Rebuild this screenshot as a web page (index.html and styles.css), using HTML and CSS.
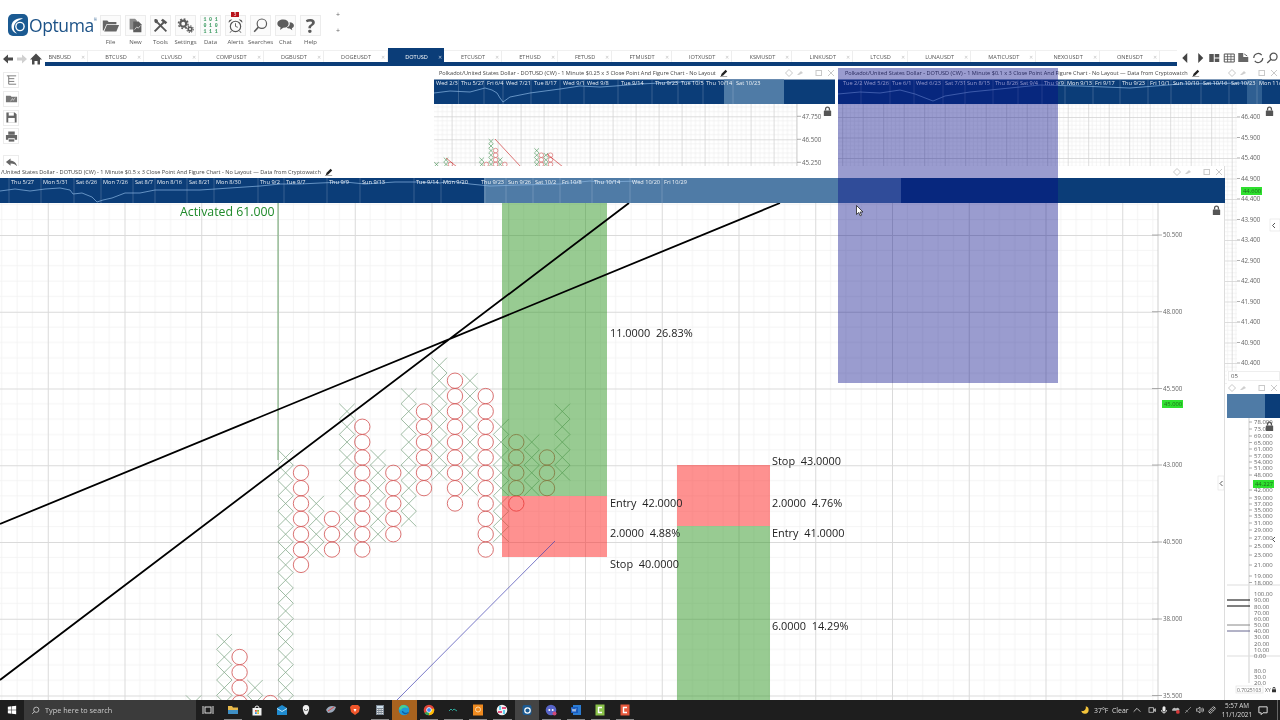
FILE: index.html
```html
<!DOCTYPE html>
<html lang="en">
<head>
<meta charset="utf-8">
<title>Optuma</title>
<link rel="stylesheet" href="styles.css">
</head>
<body>
<svg class="defs" width="0" height="0" aria-hidden="true">
  <defs>
    <symbol id="i-lock" viewBox="0 0 12 12"><path d="M3.2 5.5V3.8a2.8 2.8 0 0 1 5.6 0v1.7h-1.4V3.8a1.4 1.4 0 0 0-2.8 0v1.7z"/><rect x="2" y="5.5" width="8" height="6" rx=".6"/></symbol>
    <symbol id="i-pencil" viewBox="0 0 10 10"><path d="M1 9l1-3 5-5 2 2-5 5z" fill="#222"/><path d="M0 9.6h9" stroke="#222" stroke-width=".6"/></symbol>
    <symbol id="i-ctrl" viewBox="0 0 52 10"><g fill="none" stroke="#c9c9c9" stroke-width="1"><path d="M5 1.5l3.5 3.5L5 8.5 1.500 5z"/><rect x="32" y="2.500" width="5.500" height="5"/><path d="M44 2l6 6m0-6l-6 6"/></g><path d="M13 7l4-4 2 2-4 2z" fill="#cfcfcf"/></symbol>
    <pattern id="grid-main" patternUnits="userSpaceOnUse" x="47.75" y="158.25" width="76.75" height="76.75">
      <path d="M15.35 0V76.750M30.700 0V76.750M46.050 0V76.750M61.400 0V76.750M0 15.350H76.750M0 30.700H76.750M0 46.050H76.750M0 61.400H76.750" stroke="#f1f1f1" stroke-width=".8" fill="none"/>
      <path d="M.5 0V76.750M0 .5H76.750" stroke="#dadada" stroke-width="1" fill="none"/>
    </pattern>
    <pattern id="grid-a" patternUnits="userSpaceOnUse" x="451.6" y="115.3" width="23" height="23">
      <path d="M4.600 0V23M9.200 0V23M13.800 0V23M18.400 0V23M0 4.600H23M0 9.200H23M0 13.800H23M0 18.400H23" stroke="#ececec" stroke-width=".6" fill="none"/>
      <path d="M.4 0V23M0 .4H23" stroke="#cfcfcf" stroke-width=".8" fill="none"/>
    </pattern>
    <pattern id="grid-b" patternUnits="userSpaceOnUse" x="862.7" y="116" width="20.5" height="20.5">
      <path d="M4.100 0V20.500M8.200 0V20.500M12.300 0V20.500M16.400 0V20.500M0 4.100H20.500M0 8.200H20.500M0 12.300H20.500M0 16.400H20.500" stroke="#ededed" stroke-width=".6" fill="none"/>
      <path d="M.4 0V20.500M0 .4H20.500" stroke="#d2d2d2" stroke-width=".8" fill="none"/>
    </pattern>
  </defs>
</svg>

<div class="app">
  <header class="toolbar">
    <div class="logo">
      <svg class="logo-mark" viewBox="0 0 20 22"><rect width="20" height="22" rx="5" fill="#1b5a92"/><path d="M15 4.500C8 3.500 3.500 7.500 3.500 12.500c0 4 2.600 6.500 5.500 7-2.500-2-3.500-4-3-7 .6-3.500 4-6.500 9-8z" fill="#fff"/><circle cx="12" cy="12.500" r="4.800" fill="#fff"/><circle cx="12" cy="12.500" r="3.400" fill="#1b5a92"/></svg>
      <span class="logo-text">Optuma</span><span class="logo-reg">®</span>
    </div>
    <nav class="tools">
      <div class="tool"><div class="tool-btn"><svg viewBox="0 0 21 21"><path d="M2 5h5l1.500 1.500H17V9H6l-3 7H2z" fill="#666"/><path d="M6.500 10H20l-3 7H3.500z" fill="#666"/></svg></div><span>File</span></div>
      <div class="tool"><div class="tool-btn"><svg viewBox="0 0 21 21"><path d="M4 3h6l2 2v10H4z" fill="#8a8a8a"/><path d="M8 6h6l3 3v9H8z" fill="#5e5e5e"/><path d="M9.500 15l2.500-3 1.500 1.500 2.500-3" stroke="#fff" stroke-width=".7" fill="none"/></svg></div><span>New</span></div>
      <div class="tool"><div class="tool-btn"><svg viewBox="0 0 21 21"><path d="M4 17L15 6" stroke="#555" stroke-width="2.200"/><path d="M13 3l5 4-2 2-5-4z" fill="#555"/><path d="M17 17L7 7" stroke="#555" stroke-width="2"/><path d="M4 3.500c2-.8 4 .6 3.800 3L6.500 8C4.500 8 3 6 4 3.500z" fill="#555"/></svg></div><span>Tools</span></div>
      <div class="tool"><div class="tool-btn"><svg viewBox="0 0 21 21" fill="none" stroke="#5c5c5c"><circle cx="8" cy="8.500" r="3.300" stroke-width="2.400"/><circle cx="8" cy="8.500" r="5.300" stroke-width="1.600" stroke-dasharray="2 2.150"/><circle cx="15.500" cy="14.500" r="2" stroke-width="1.800"/><circle cx="15.500" cy="14.500" r="3.600" stroke-width="1.200" stroke-dasharray="1.500 1.300"/></svg></div><span>Settings</span></div>
      <div class="tool"><div class="tool-btn data-btn"><b>1 0 1</b><b>0 1 0</b><b>1 1 1</b></div><span>Data</span></div>
      <div class="tool"><div class="tool-btn"><svg viewBox="0 0 21 21" fill="none" stroke="#555"><circle cx="10.500" cy="11.500" r="5.700" stroke-width="1.300"/><path d="M10.500 8v3.500l2.500 1M6 16.500l-1.500 2M15 16.500l1.500 2" stroke-width="1"/><path d="M3 7.500a3 3 0 0 1 4-3.500zM18 7.500a3 3 0 0 0-4-3.500z" fill="#555" stroke="none"/></svg></div><span>Alerts</span><i class="badge">3</i></div>
      <div class="tool"><div class="tool-btn"><svg viewBox="0 0 21 21" fill="none" stroke="#5a5a5a"><circle cx="12" cy="8.500" r="5.200" stroke-width="1.300"/><path d="M8.200 12.300L3.500 17.500" stroke-width="1.700"/></svg></div><span>Searches</span></div>
      <div class="tool"><div class="tool-btn"><svg viewBox="0 0 21 21" fill="#5c5c5c"><path d="M8 4c3.800 0 6 2 6 4.500S11.800 13 8 13l-3.500 2.500.5-3C3 11.700 1.500 10.300 1.500 8.500 1.500 6 4.200 4 8 4z"/><path d="M15 7c2.800 0 4.800 1.500 4.800 3.500 0 1.400-1 2.500-2.300 3l.5 2.200-2.800-1.800c-1.500 0-2.800-.5-3.500-1.200 2.800-.8 4.300-2.700 3.300-5.700z"/></svg></div><span>Chat</span></div>
      <div class="tool"><div class="tool-btn help-btn">?</div><span>Help</span></div>
    </nav>
    <div class="plus-col"><span>+</span><span>+</span></div>
  </header>

  <div class="tabbar">
    <div class="nav-left">
      <svg viewBox="0 0 14 14"><path d="M2 7l5-4.500V5.500h5v3H7v3z" fill="#4a4a4a"/></svg>
      <svg viewBox="0 0 14 14"><path d="M12 7L7 2.500V5.500H2v3h5v3z" fill="#d0d0d0"/></svg>
      <svg viewBox="0 0 14 14"><path d="M7 1.500l6 6h-2v5H8.500V9h-3v3.500H3v-5H1z" fill="#4a4a4a"/></svg>
    </div>
    <div class="tabs">
      <div class="tab first"><span>BNBUSD</span><i>✕</i></div>
      <div class="tab"><span>BTCUSD</span><i>✕</i></div>
      <div class="tab"><span>CLVUSD</span><i>✕</i></div>
      <div class="tab"><span>COMPUSDT</span><i>✕</i></div>
      <div class="tab"><span>DGBUSDT</span><i>✕</i></div>
      <div class="tab"><span>DOGEUSDT</span><i>✕</i></div>
      <div class="tab active"><span>DOTUSD</span><i>✕</i></div>
      <div class="tab"><span>ETCUSDT</span><i>✕</i></div>
      <div class="tab"><span>ETHUSD</span><i>✕</i></div>
      <div class="tab"><span>FETUSD</span><i>✕</i></div>
      <div class="tab"><span>FTMUSDT</span><i>✕</i></div>
      <div class="tab"><span>IOTXUSDT</span><i>✕</i></div>
      <div class="tab"><span>KSMUSDT</span><i>✕</i></div>
      <div class="tab"><span>LINKUSDT</span><i>✕</i></div>
      <div class="tab"><span>LTCUSD</span><i>✕</i></div>
      <div class="tab"><span>LUNAUSDT</span><i>✕</i></div>
      <div class="tab"><span>MATICUSDT</span><i>✕</i></div>
      <div class="tab"><span>NEXOUSDT</span><i>✕</i></div>
      <div class="tab"><span>ONEUSDT</span><i>✕</i></div>
    </div>
    <div class="nav-right">
      <svg viewBox="0 0 14 14"><path d="M9 2L4 7l5 5z" fill="#444"/></svg>
      <svg viewBox="0 0 14 14"><path d="M5 2l5 5-5 5z" fill="#444"/></svg>
      <svg viewBox="0 0 14 14"><path d="M2 3h4.500v8H2zM7.500 3H12v3.500H7.500zM7.500 7.500H12V11H7.500z" fill="#555"/></svg>
      <svg viewBox="0 0 14 14"><path d="M2 3h10v8H2z" fill="none" stroke="#555" stroke-width="1"/><path d="M2 5.700h10M2 8.300h10M5.300 3v8M8.700 3v8" stroke="#555" stroke-width=".8"/></svg>
      <svg viewBox="0 0 14 14"><path d="M2 2h5v4h5v5H2z" fill="#666"/><path d="M8 3l3 2" stroke="#666"/></svg>
      <svg viewBox="0 0 14 14" fill="none" stroke="#555" stroke-width="1.200"><path d="M2.500 7a4.500 4.500 0 0 1 8-2.800M11.500 7a4.500 4.500 0 0 1-8 2.800"/></svg>
      <svg viewBox="0 0 14 14" fill="none" stroke="#555" stroke-width="1.300"><circle cx="8.300" cy="5.700" r="3.500"/><path d="M5.800 8.200L2 12"/></svg>
    </div>
  </div>

  <main class="workspace">
    <aside class="side">
      <div class="side-btn"><svg viewBox="0 0 14 14"><path d="M2 2h10M4 5h6M4 8h6M4 11h8M4 2v9" stroke="#777" stroke-width="1" fill="none"/></svg></div>
      <div class="side-btn"><svg viewBox="0 0 14 14"><path d="M1 4h5l1 1h6v6H1z" fill="#777"/><path d="M6 10l2-3 1 2 2-3" stroke="#eee" stroke-width=".6" fill="none"/></svg></div>
      <div class="side-btn"><svg viewBox="0 0 14 14"><path d="M1.500 1.500h9l2 2v9h-11z" fill="#666"/><rect x="4" y="1.500" width="5.500" height="3.500" fill="#fff"/><rect x="3.500" y="7.500" width="7" height="5" fill="#fff"/></svg></div>
      <div class="side-btn"><svg viewBox="0 0 14 14"><path d="M3.500 1.500h7V5h-7zM1 5.500h12v5h-2.500V9h-7v1.500H1z" fill="#666"/><rect x="4" y="10" width="6" height="2.500" fill="#666"/></svg></div>
      <div class="side-btn back"><svg viewBox="0 0 14 14"><path d="M1 5.500L6 1.500v2.500c4 0 6.500 2.500 7 6.500-1.500-2.500-3.500-3.500-7-3.500V9.500z" fill="#666"/></svg></div>
    </aside>

    <section class="win win-a">
      <div class="win-title"><span>Polkadot/United States Dollar - DOTUSD (CW) - 1 Minute $0.25 x 3 Close Point And Figure Chart - No Layout</span><svg class="pencil"><use href="#i-pencil"/></svg><svg class="ctrl"><use href="#i-ctrl"/></svg></div>
      <svg class="chart" viewBox="434 78 401 88" width="401" height="88">
        <rect x="434" y="103" width="363" height="63" fill="url(#grid-a)"/>
        <rect x="434" y="78.500" width="401" height="24.500" fill="#0b3d78"/>
        <rect x="724" y="78.500" width="60" height="24.500" fill="#4f7ba6"/>
        <path class="strip-sep" d="M458.500 79v24M484 79v24M503 79v24M531 79v24M560 79v24M584 79v24M618 79v24M652 79v24M678 79v24M703 79v24M733 79v24"/>
        <polyline class="strip-line" points="434,92 450,90 470,91 485,87 492,89 497,92 500,97 503,101 510,96 530,92 560,88 580,85 600,86 615,85 640,83 700,80"/>
        <g class="strip-text">
          <text x="436" y="84">Wed 2/3</text><text x="461" y="84">Thu 5/27</text><text x="487" y="84">Fri 6/4</text><text x="506" y="84">Wed 7/21</text><text x="534" y="84">Tue 8/17</text><text x="563" y="84">Wed 9/1</text><text x="587" y="84">Wed 9/8</text><text x="621" y="84">Tue 9/14</text><text x="655" y="84">Thu 9/23</text><text x="681" y="84">Tue 10/5</text><text x="706" y="84">Thu 10/14</text><text x="736" y="84">Sat 10/23</text>
        </g>
        <g id="marks-a"></g>
        <path d="M495 138l26 28M446 157l11 9M547 153l16 13" stroke="#d03a3a" stroke-width=".7" fill="none"/>
        <path class="axis-line" d="M797 103v63"/>
        <path class="axis-tick" d="M797 115.300h4M797 138.300h4M797 161.300h4"/>
        <g class="axis-text"><text x="802" y="117.500">47.750</text><text x="802" y="140.500">46.500</text><text x="802" y="163.500">45.250</text></g>
        <svg x="822" y="104" width="11" height="12" class="lock"><use href="#i-lock"/></svg>
      </svg>
    </section>

    <section class="win win-b">
      <div class="win-title"><span>Polkadot/United States Dollar - DOTUSD (CW) - 1 Minute $0.1 x 3 Close Point And Figure Chart - No Layout — Data from Cryptowatch</span><svg class="pencil"><use href="#i-pencil"/></svg><svg class="ctrl"><use href="#i-ctrl"/></svg></div>
      <svg class="chart" viewBox="838 78 442 305" width="442" height="305">
        <rect x="838" y="103" width="399" height="280" fill="url(#grid-b)"/>
        <rect x="838" y="78.500" width="442" height="24.500" fill="#0b3d78"/>
        <rect x="1247" y="78.500" width="15" height="24.500" fill="#2f5f92"/>
        <path class="strip-sep" d="M861 79v24M890 79v24M914 79v24M943 79v24M965 79v24M993 79v24M1018 79v24M1042 79v24M1065 79v24M1093 79v24M1120 79v24M1148 79v24M1171 79v24M1201 79v24M1229 79v24M1257 79v24"/>
        <polyline class="strip-line" points="838,93 860,91 880,92 900,89 915,93 933,100 945,95 970,91 1000,88 1040,84 1080,85 1130,87 1180,83 1250,82"/>
        <g class="strip-text">
          <text x="843" y="84">Tue 2/2</text><text x="864" y="84">Wed 5/26</text><text x="892" y="84">Tue 6/1</text><text x="916" y="84">Wed 6/23</text><text x="945" y="84">Sat 7/31</text><text x="967" y="84">Sun 8/15</text><text x="995" y="84">Thu 8/26</text><text x="1020" y="84">Sat 9/4</text><text x="1044" y="84">Thu 9/9</text><text x="1067" y="84">Mon 9/13</text><text x="1095" y="84">Fri 9/17</text><text x="1122" y="84">Thu 9/23</text><text x="1150" y="84">Fri 10/1</text><text x="1173" y="84">Sun 10/10</text><text x="1203" y="84">Sat 10/16</text><text x="1231" y="84">Sat 10/23</text><text x="1259" y="84">Mon 11/</text>
        </g>
        <path class="axis-tick" d="M1237 116h3M1237 136.500h3M1237 157h3M1237 177.500h3M1237 198h3M1237 218.500h3M1237 239h3M1237 259.500h3M1237 280h3M1237 300.500h3M1237 321h3M1237 341.500h3M1237 362h3"/>
        <g class="axis-text"><text x="1241" y="118">46.400</text><text x="1241" y="138.500">45.900</text><text x="1241" y="159">45.400</text><text x="1241" y="179.500">44.900</text><text x="1241" y="200">44.400</text><text x="1241" y="220.500">43.900</text><text x="1241" y="241">43.400</text><text x="1241" y="261.500">42.900</text><text x="1241" y="282">42.400</text><text x="1241" y="302.500">41.900</text><text x="1241" y="323">41.400</text><text x="1241" y="343.500">40.900</text><text x="1241" y="364">40.400</text></g>
        <rect x="1241" y="186" width="21" height="8" fill="#2fe02f"/>
        <text class="price-tag" x="1243" y="192">44.600</text>
        <svg x="1264" y="104" width="11" height="12" class="lock"><use href="#i-lock"/></svg>
        <rect x="1270" y="218" width="10" height="12" fill="#fff" stroke="#e2e2e2" stroke-width=".6"/>
        <path d="M1275 222l-2.500 2.500 2.500 2.500" stroke="#555" fill="none"/>
      </svg>
    </section>

    <section class="win win-main">
      <div class="win-title"><span>/United States Dollar - DOTUSD (CW) - 1 Minute $0.5 x 3 Close Point And Figure Chart - No Layout — Data from Cryptowatch</span><svg class="pencil"><use href="#i-pencil"/></svg><svg class="ctrl"><use href="#i-ctrl"/></svg></div>
      <svg class="chart" viewBox="0 178 1225 522" width="1225" height="522">
        <rect x="0" y="203" width="1158" height="497" fill="url(#grid-main)"/>
        <g id="marks-main"></g>
        <rect class="box-green" x="502" y="203" width="105" height="293"/>
        <rect class="box-red" x="502" y="496" width="105" height="61"/>
        <rect class="box-red" x="677" y="465" width="93" height="61"/>
        <rect class="box-green" x="677" y="526" width="93" height="174"/>
        <path d="M278 203v257" stroke="#6fa76f" stroke-width="1" fill="none"/>
        <path d="M397 700L555 541" stroke="#4040b0" stroke-width=".7" fill="none"/>
        <path d="M0 680L629 203M0 524L780 203" stroke="#000" stroke-width="1.800" fill="none"/>
        <rect x="0" y="178" width="1225" height="25" fill="#0b3d78"/>
        <rect x="484" y="178" width="417" height="25" fill="#4f7ba6"/>
        <path class="strip-sep" d="M9 178v25M41 178v25M74 178v25M101 178v25M133 178v25M155 178v25M187 178v25M214 178v25M258 178v25M284 178v25M327 178v25M360 178v25M414 178v25M441 178v25M485 178v25M506 178v25M533 178v25M560 178v25M592 178v25M630 178v25M662 178v25"/>
        <polyline class="strip-line" points="0,191 15,189 30,191 45,189 60,188 70,190 73,194 82,193 92,197 97,202 103,200 112,198 125,193 140,193 155,190 175,190 200,190 230,188 260,186 280,184 300,184 320,183 345,182 365,184 395,182 420,182 440,183 450,181 470,184 490,186 520,185 560,184 590,181 600,182 640,181"/>
        <g class="strip-text">
          <text x="11" y="184">Thu 5/27</text><text x="43" y="184">Mon 5/31</text><text x="76" y="184">Sat 6/26</text><text x="103" y="184">Mon 7/26</text><text x="135" y="184">Sat 8/7</text><text x="157" y="184">Mon 8/16</text><text x="189" y="184">Sat 8/21</text><text x="216" y="184">Mon 8/30</text><text x="260" y="184">Thu 9/2</text><text x="286" y="184">Tue 9/7</text><text x="329" y="184">Thu 9/9</text><text x="362" y="184">Sun 9/13</text><text x="416" y="184">Tue 9/14</text><text x="443" y="184">Mon 9/20</text><text x="481" y="184">Thu 9/23</text><text x="508" y="184">Sun 9/26</text><text x="535" y="184">Sat 10/2</text><text x="562" y="184">Fri 10/8</text><text x="594" y="184">Thu 10/14</text><text x="632" y="184">Wed 10/20</text><text x="664" y="184">Fri 10/29</text>
        </g>
        <text class="activated" x="180" y="216">Activated 61.000</text>
        <g class="trade-text">
          <text x="610" y="337">11.0000  26.83%</text>
          <text x="610" y="507">Entry  42.0000</text>
          <text x="610" y="537">2.0000  4.88%</text>
          <text x="610" y="568">Stop  40.0000</text>
          <text x="772" y="465">Stop  43.0000</text>
          <text x="772" y="507">2.0000  4.76%</text>
          <text x="772" y="537">Entry  41.0000</text>
          <text x="772" y="630">6.0000  14.29%</text>
        </g>
        <path class="axis-line" d="M1158 203v497"/>
        <path class="axis-tick" d="M1152 235h10M1152 311.700h10M1152 388.500h10M1152 465h10M1152 542h10M1152 619h10M1152 695.500h10"/>
        <g class="axis-text"><text x="1163" y="237">50.500</text><text x="1163" y="314">48.000</text><text x="1163" y="390.500">45.500</text><text x="1163" y="467">43.000</text><text x="1163" y="544">40.500</text><text x="1163" y="621">38.000</text><text x="1163" y="697.500">35.500</text></g>
        <rect x="1162" y="400" width="21" height="8" fill="#2fe02f"/>
        <text class="price-tag" x="1164" y="406">45.000</text>
        <svg x="1211" y="204" width="11" height="12" class="lock"><use href="#i-lock"/></svg>
        <rect x="1218" y="476" width="6" height="14" fill="#fff" stroke="#e2e2e2" stroke-width=".6"/>
        <path d="M1222.500 481l-2.500 2.500 2.500 2.500" stroke="#555" fill="none"/>
      </svg>
    </section>

    <section class="win win-c">
      <div class="field-05">05</div>
      <div class="win-title"><svg class="ctrl"><use href="#i-ctrl"/></svg></div>
      <svg class="chart" viewBox="1227 396 53 304" width="53" height="304">
        <rect x="1227" y="396" width="38" height="24" fill="#4f7ba6"/>
        <rect x="1265" y="396" width="15" height="24" fill="#0b3d78"/>
        <path class="axis-line" d="M1249 420v265"/>
        <path d="M1227 587h53M1227 658h53" stroke="#ddd" stroke-width="1"/>
        <path d="M1227 602h23M1227 608h23" stroke="#000" stroke-width="1"/>
        <path d="M1227 627h23" stroke="#888" stroke-width="1"/>
        <path d="M1227 633h23" stroke="#66668f" stroke-width="1"/>
        <path class="axis-tick" d="M1249 424h3M1249 431h3M1249 438h3M1249 444.500h3M1249 451h3M1249 458h3M1249 464h3M1249 470h3M1249 477h3M1249 492h3M1249 500h3M1249 506h3M1249 512h3M1249 518h3M1249 525h3M1249 532h3M1249 540h3M1249 548h3M1249 557h3M1249 567h3M1249 578h3M1249 584.500h3"/>
        <g class="axis-text c">
          <text x="1254" y="426">78.000</text><text x="1254" y="433">73.000</text><text x="1254" y="440">69.000</text><text x="1254" y="446.500">65.000</text><text x="1254" y="453">61.000</text><text x="1254" y="460">57.000</text><text x="1254" y="466">54.000</text><text x="1254" y="472">51.000</text><text x="1254" y="479">48.000</text><text x="1254" y="494">42.000</text><text x="1254" y="502">39.000</text><text x="1254" y="508">37.000</text><text x="1254" y="514">35.000</text><text x="1254" y="520">33.000</text><text x="1254" y="527">31.000</text><text x="1254" y="534">29.000</text><text x="1254" y="542">27.000</text><text x="1254" y="550">25.000</text><text x="1254" y="559">23.000</text><text x="1254" y="569">21.000</text><text x="1254" y="580">19.000</text><text x="1254" y="586.500">18.000</text>
          <text x="1254" y="598">100.00</text><text x="1254" y="604">90.00</text><text x="1254" y="610.500">80.00</text><text x="1254" y="617">70.00</text><text x="1254" y="623">60.00</text><text x="1254" y="629">50.00</text><text x="1254" y="635">40.00</text><text x="1254" y="641">30.00</text><text x="1254" y="647.500">20.00</text><text x="1254" y="654">10.00</text><text x="1254" y="660">0.00</text>
          <text x="1254" y="674.500">80.0</text><text x="1254" y="681">30.0</text><text x="1254" y="687">20.0</text>
        </g>
        <rect x="1253" y="482" width="21" height="8" fill="#2fe02f"/>
        <text class="price-tag" x="1255" y="488">44.227</text>
        <svg x="1264" y="422" width="11" height="12" class="lock"><use href="#i-lock"/></svg>
        <path d="M1275 539l-2.500 2.500 2.500 2.500" stroke="#555" fill="none"/>
        <rect x="1236" y="688" width="27" height="7" fill="#fff" stroke="#ddd" stroke-width=".6"/>
        <text class="axis-small" x="1237" y="693.500">0.7025103</text>
        <text class="axis-small" x="1265" y="693.500">XY</text>
        <svg x="1271" y="688" width="6" height="7" class="lock dark"><use href="#i-lock"/></svg>
      </svg>
    </section>

    <div class="selection"></div>
    <svg class="cursor" viewBox="0 0 8 12"><path d="M.5.500v9l2.200-2 1.500 3.300 1.300-.6-1.400-3.200H7z" fill="#fff" stroke="#222" stroke-width=".8"/></svg>
  </main>

  <footer class="taskbar">
    <div class="start"><svg viewBox="0 0 12 12"><path d="M1 2.200l4.400-.6v4.100H1zM6 1.500L11 .8v4.900H6zM1 6.300h4.400v4.100L1 9.800zM6 6.300h5v4.900l-5-.7z" fill="#fff"/></svg></div>
    <div class="search"><svg viewBox="0 0 12 12" fill="none" stroke="#ddd"><circle cx="7" cy="5" r="3.500"/><path d="M4.500 7.500L1.500 10.500"/></svg><span>Type here to search</span></div>
    <div class="task-icons">
      <div class="ti"><svg viewBox="0 0 12 12" fill="none" stroke="#ddd"><rect x="3" y="3" width="6" height="6"/><path d="M1 2v8M11 2v8"/></svg></div>
      <div class="ti run"><svg viewBox="0 0 12 12"><path d="M1 2h4l1 1.500h5V10H1z" fill="#e6b84a"/><rect x="1" y="6" width="10" height="4" fill="#3e8fc4"/></svg></div>
      <div class="ti"><svg viewBox="0 0 12 12"><path d="M1.500 4h9v7.500h-9z" fill="#f2f2f2"/><path d="M4 4a2 2 0 0 1 4 0" stroke="#eee" fill="none"/><path d="M4 6h1.800v1.800H4z" fill="#e74c2e"/><path d="M6.200 6H8v1.800H6.200z" fill="#6cb33f"/><path d="M4 8.200h1.800V10H4z" fill="#2f8fd8"/><path d="M6.200 8.200H8V10H6.200z" fill="#f2b91c"/></svg></div>
      <div class="ti"><svg viewBox="0 0 12 12"><path d="M1 4l5-3 5 3v7H1z" fill="#1f8bcf"/><path d="M1 4.500l5 3 5-3" stroke="#bfe6fb" fill="none"/></svg></div>
      <div class="ti"><svg viewBox="0 0 12 12"><path d="M6 1c2.500 0 3.500 2 3.200 4C8.800 8 7 11 6 11S3.200 8 2.800 5C2.500 3 3.500 1 6 1z" fill="#eee"/><path d="M4 5.500l1.500 1M8 5.500L6.500 6.500" stroke="#222"/></svg></div>
      <div class="ti"><svg viewBox="0 0 12 12"><path d="M1 6c2-4 6-5 10-3-1 3-3 6-8 6z" fill="#9aa7b8"/><path d="M3 7l6-4" stroke="#e04a4a"/></svg></div>
      <div class="ti"><svg viewBox="0 0 12 12"><path d="M3 1h6l2 2-1 5-4 3-4-3-1-5z" fill="#f0562b"/><path d="M4.500 5L6 8l1.500-3z" fill="#fff"/></svg></div>
      <div class="ti run"><svg viewBox="0 0 12 12"><rect x="2" y="1" width="8" height="10" fill="#7e8a96"/><rect x="3" y="2" width="6" height="2" fill="#cfe0ec"/><path d="M3 5.500h6M3 7.500h6M3 9.500h6" stroke="#e8e8e8" stroke-dasharray="1.400 .9"/></svg></div>
      <div class="ti edge"><svg viewBox="0 0 12 12"><circle cx="6" cy="6" r="5.300" fill="#1e9bd8"/><path d="M3 7c0-3 4-4.500 7-2.500 0-1-2-3.500-4.500-3.500C3 1 1 3 .8 6c.5-1 1.500-1.500 2.200 1z" fill="#49d08e"/><path d="M4.500 7c0 2 3 3.500 6 1.500" stroke="#0e5fa8" stroke-width="1.400" fill="none"/></svg></div>
      <div class="ti run"><svg viewBox="0 0 12 12"><circle cx="6" cy="6" r="5.300" fill="#e0453a"/><path d="M6 6L1.500 9.300A5.300 5.300 0 0 0 6 11.300z" fill="#35a853"/><path d="M6 6l5-1.500A5.300 5.300 0 0 1 6 11.300z" fill="#fbbc05"/><circle cx="6" cy="6" r="2.400" fill="#4285f4" stroke="#fff" stroke-width=".8"/></svg></div>
      <div class="ti run"><svg viewBox="0 0 12 12"><path d="M2 7l2-2 1.500 1.500L7 5l3 2" stroke="#2fa89a" fill="none"/></svg></div>
      <div class="ti run"><svg viewBox="0 0 12 12"><rect x="1" y="0.500" width="10" height="11" fill="#ef8a1f"/><circle cx="6" cy="5.500" r="2.500" fill="none" stroke="#ffd9a6"/></svg></div>
      <div class="ti run"><svg viewBox="0 0 12 12"><circle cx="6" cy="6" r="5.300" fill="#f2f2f2"/><path d="M4 2v4M8 6v4" stroke="#36c5f0" stroke-width="1.500"/><path d="M2 8h4M6 4h4" stroke="#e01e5a" stroke-width="1.500"/></svg></div>
      <div class="ti current"><svg viewBox="0 0 12 12"><rect x="1.500" y="1" width="9" height="10" rx="2" fill="#1b5a92"/><circle cx="6.500" cy="6.500" r="2.700" fill="none" stroke="#fff" stroke-width="1.200"/></svg></div>
      <div class="ti run"><svg viewBox="0 0 12 12"><circle cx="6" cy="6" r="5.300" fill="#5865c9"/><circle cx="4.300" cy="6" r="1" fill="#fff"/><circle cx="7.700" cy="6" r="1" fill="#fff"/><circle cx="9.500" cy="9.500" r="2" fill="#d04a7a"/></svg></div>
      <div class="ti run"><svg viewBox="0 0 12 12"><rect x="3" y="1" width="8" height="10" fill="#2b7cd3"/><rect x="1" y="3" width="7" height="6" fill="#185abd"/><path d="M2 4.500l1 3 1-2.500 1 2.500 1-3" stroke="#fff" stroke-width=".6" fill="none"/></svg></div>
      <div class="ti run"><svg viewBox="0 0 12 12"><rect x="1.500" y="0.500" width="9" height="11" fill="#8bc34a"/><path d="M8 3.500H4.500v5H8" stroke="#fff" stroke-width="1.400" fill="none"/></svg></div>
      <div class="ti run"><svg viewBox="0 0 12 12"><rect x="1.500" y="0.500" width="9" height="11" fill="#e8593c"/><path d="M8 3.500H4.500v5H8" stroke="#fff" stroke-width="1.400" fill="none"/></svg></div>
    </div>
    <div class="tray">
      <svg class="tray-i" viewBox="0 0 12 12"><path d="M7 1a5 5 0 1 1-6 6c3 1.500 7-1.500 6-6z" fill="#f3c33a"/></svg>
      <span class="weather">37°F&nbsp; Clear</span>
      <svg class="tray-chev" viewBox="0 0 12 12"><path d="M2 8l4-4 4 4" stroke="#ddd" fill="none"/></svg>
      <svg class="tray-i" viewBox="0 0 12 12"><rect x="2" y="3" width="6" height="6" fill="none" stroke="#ddd"/><path d="M9 4.500l2-1v5l-2-1z" fill="#ddd"/></svg>
      <svg class="tray-i" viewBox="0 0 12 12"><rect x="4" y="1" width="4" height="7" rx="2" fill="#eee"/><path d="M2.500 6a3.500 3.500 0 0 0 7 0M6 9.500V11" stroke="#eee" fill="none"/></svg>
      <svg class="tray-i" viewBox="0 0 12 12"><path d="M1 7a3 3 0 0 1 5-3 2.500 2.500 0 0 1 4 3z" fill="#bbb"/><circle cx="8.500" cy="8.500" r="2.500" fill="#d93a3a"/></svg>
      <svg class="tray-i" viewBox="0 0 12 12"><path d="M2 10L10 2M3 6l3 3" stroke="#999" fill="none"/></svg>
      <svg class="tray-i" viewBox="0 0 12 12"><path d="M1 4.500h2L6 2v8L3 7.500H1z" fill="none" stroke="#ddd"/><path d="M8 4a3 3 0 0 1 0 4M9.500 3a4.500 4.500 0 0 1 0 6" stroke="#ddd" fill="none"/></svg>
      <svg class="tray-i" viewBox="0 0 12 12"><path d="M2 10l2.500-2.500M7.500 4.500L10 2M4 5l3 3-1.500 1.500a2 2 0 0 1-3-3zM8 7L5 4l1.500-1.500a2 2 0 0 1 3 3z" stroke="#ddd" fill="none"/></svg>
      <div class="clock"><span>5:57 AM</span><span>11/1/2021</span></div>
      <svg class="tray-note" viewBox="0 0 12 12"><path d="M1.500 2h9v6.500H6L4 10.500v-2H1.500z" fill="none" stroke="#eee"/></svg>
      <div class="show-desktop"></div>
    </div>
  </footer>
</div>
<script src="app.js"></script>
</body>
</html>
```
FILE: styles.css
```css
* { box-sizing: border-box; }
html, body { margin: 0; height: 100%; overflow: hidden; background: #fff; }
body { font-family: "Open Sans", "Liberation Sans", sans-serif; color: #444; }
.defs { position: absolute; }
.app { display: flex; flex-direction: column; width: 1280px; height: 720px; filter: blur(.3px); }

/* top toolbar */
.toolbar { flex: 0 0 50px; display: flex; align-items: flex-start; padding: 14px 0 0 8px; }
.logo { display: flex; align-items: flex-start; width: 90px; }
.logo-mark { width: 20px; height: 22px; flex: none; }
.logo-text { font-size: 17.500px; line-height: 22px; letter-spacing: -.4px; color: #1c5287; margin-left: 1px; }
.logo-reg { font-size: 4px; line-height: 12px; color: #1c5287; }
.tools { display: flex; margin-top: 1px; }
.tool { position: relative; width: 25px; display: flex; flex-direction: column; align-items: center; }
.tool span { font-size: 6px; line-height: 8px; margin-top: 2px; color: #555; white-space: nowrap; }
.tool-btn { width: 21px; height: 21px; border: 1px solid #ececec; display: flex; align-items: center; justify-content: center; background: #fbfbfb; }
.tool-btn svg { width: 19px; height: 19px; }
.data-btn { flex-direction: column; gap: 0; }
.data-btn b { font-size: 5px; line-height: 6px; color: #3a9a60; font-family: "Liberation Mono", monospace; letter-spacing: -.2px; }
.help-btn { font-size: 20px; font-weight: 700; color: #5a5a5a; line-height: 19px; }
.badge { position: absolute; top: -3px; left: 8px; width: 8px; height: 5px; background: #b8141c; color: #fff; font: normal 4.5px/5px "Open Sans", sans-serif; text-align: center; }
.plus-col { display: flex; flex-direction: column; gap: 8px; margin-left: 13px; margin-top: -3px; font-size: 7px; line-height: 8px; color: #666; }

/* tab bar */
.tabbar { flex: 0 0 18px; display: flex; }
.nav-left { display: flex; width: 45px; height: 16px; padding-left: 1px; border-top: 1px solid #eee; align-items: center; }
.nav-left svg { width: 14px; height: 14px; }
.tabs { display: flex; flex: 0 0 1132px; height: 16px; border-bottom: 4px solid #0b3d78; border-top: 1px solid #f0f0f0; }
.tab { display: flex; align-items: center; padding-left: 17.200px; gap: 10px; font-size: 5.600px; white-space: nowrap; color: #555; height: 11px; border-right: 1px solid #eee; }
.tab.first { padding-left: 3.500px; }
.tab span { display: block; }
.tab i { font-style: normal; font-size: 5px; color: #c4c4c4; width: 6px; }
.tab.active { background: #0b3d78; color: #fff; height: 17px; margin-top: -3px; border: 0; }
.tab.active i { color: #b8c8da; }
.nav-right { display: flex; height: 16px; align-items: center; margin-left: 1px; }
.nav-right svg { width: 14.500px; height: 14px; flex: none; }

/* workspace */
.workspace { flex: 1; position: relative; overflow: hidden; }
.side { display: flex; flex-direction: column; gap: 2.800px; padding: 4px 0 0 3px; width: 20px; }
.side-btn { width: 16px; height: 16px; border: 1px solid #ececec; display: flex; align-items: center; justify-content: center; }
.side-btn svg { width: 13px; height: 13px; }
.side-btn.back { margin-top: 8px; }

.win { position: absolute; background: #fff; }
.win-a { left: 434px; top: 0; width: 401px; height: 98px; }
.win-b { left: 838px; top: 0; width: 442px; height: 315px; }
.win-main { left: 0; top: 98px; width: 1225px; height: 534px; border-right: 1px solid #ddd; }
.win-c { left: 1227px; top: 303px; width: 53px; height: 329px; overflow: hidden; }
.win-title { height: 10.500px; display: flex; align-items: center; font-size: 5.580px; white-space: nowrap; color: #444; padding-left: 5px; overflow: hidden; }
.win-main .win-title { height: 12px; padding-left: 1px; }
.win-b .win-title { padding-left: 7px; }
.pencil { width: 8px; height: 8px; margin-left: 4px; flex: none; fill: none; }
.ctrl { width: 52px; height: 10px; margin-left: auto; margin-right: 0; flex: none; }
.win-a .ctrl { margin-right: -1px; }
.win-b .ctrl { margin-right: 1px; }
.chart { display: block; }
.field-05 { height: 10px; margin-left: 1px; padding-left: 2px; font-size: 6px; line-height: 9px; border: 1px solid #eee; color: #555; }
.win-c .win-title { height: 13px; padding-left: 0; }
.win-c .ctrl { margin-left: 0; }

/* chart parts */
.strip-sep { stroke: rgba(255,255,255,.18); stroke-width: 1; fill: none; }
.strip-line { stroke: #8ab6e2; stroke-width: .7; fill: none; }
.strip-text text { font-size: 5.600px; fill: rgba(255,255,255,.9); }
.axis-line { stroke: #cfcfcf; stroke-width: 1; fill: none; }
.axis-tick { stroke: #999; stroke-width: .8; fill: none; }
.axis-text text { font-size: 6.200px; fill: #666; }
.axis-text.c text { font-size: 6px; }
.price-tag { font-size: 5.800px; fill: #1e6a1e; }
.axis-small { font-size: 5px; fill: #666; }
.lock { fill: #555; }
.lock.dark { fill: #333; }
.box-green { fill: rgba(49,151,37,.5); }
.box-red { fill: rgba(253,35,33,.5); }
.activated { font-size: 12.300px; fill: #1f8a2a; }
.trade-text text { font-size: 10.900px; fill: #222; white-space: pre; }
.mark-x { stroke: #86ab8d; stroke-width: .8; fill: none; }
.mark-o { stroke: #d65c5c; stroke-width: .85; fill: none; }
.win-a .mark-x { stroke-width: .6; stroke: #3f8f4f; }
.win-a .mark-o { stroke-width: .6; }

/* measuring rectangle laid over the windows */
.selection { position: absolute; left: 838px; top: 0; width: 220px; height: 315px; background: rgba(2,8,135,.4); }
.cursor { position: absolute; left: 856px; top: 137px; width: 8px; height: 12px; }

/* taskbar */
.taskbar { flex: 0 0 20px; display: flex; background: #1e1e1e; color: #ddd; }
.start { width: 24px; display: flex; align-items: center; justify-content: center; }
.start svg { width: 10px; height: 10px; }
.search { width: 172px; background: #3b3b3b; display: flex; align-items: center; padding-left: 7px; gap: 5px; font-size: 7.300px; color: #ccc; }
.search svg { width: 9px; height: 9px; }
.task-icons { display: flex; }
.ti { width: 24.500px; display: flex; align-items: center; justify-content: center; position: relative; }
.ti svg { width: 12px; height: 12px; }
.ti.run::after { content: ""; position: absolute; left: 3px; right: 3px; bottom: 0; height: 1px; background: #888; }
.ti.edge { background: #a8631f; }
.ti.current { background: #444; }
.tray { margin-left: auto; display: flex; align-items: center; width: 201px; }
.tray-i { width: 12px; height: 12px; flex: none; padding: 1.500px; }
.weather { font-size: 6.900px; margin-left: 3px; width: 34px; white-space: nowrap; }
.tray-chev { width: 18px; height: 10px; flex: none; }
.clock { width: 38px; display: flex; flex-direction: column; align-items: center; font-size: 6.400px; line-height: 9px; }
.tray-note { width: 14px; height: 11px; flex: none; }
.show-desktop { flex: 1; height: 20px; border-left: 1px solid #666; margin-left: 7px; }
```
FILE: app.js
```js
// Draws the point-and-figure columns of X and O marks into the chart SVGs.
const NS = 'http://www.w3.org/2000/svg';

function drawColumn(group, type, x, from, to, originY, box) {
  const half = box / 2;
  for (let k = from; k <= to; k++) {
    const y = originY + k * box;
    if (type === 'x') {
      const p = document.createElementNS(NS, 'path');
      p.setAttribute('class', 'mark-x');
      p.setAttribute('d', `M${x - half} ${y - half}L${x + half} ${y + half}M${x + half} ${y - half}L${x - half} ${y + half}`);
      group.appendChild(p);
    } else {
      const c = document.createElementNS(NS, 'circle');
      c.setAttribute('class', 'mark-o');
      c.setAttribute('cx', x);
      c.setAttribute('cy', y);
      c.setAttribute('r', half);
      group.appendChild(c);
    }
  }
}

const mainColumns = [
  ['x', 193.6, 21, 21], ['x', 224.3, 17, 21], ['o', 239.6, 18, 21], ['x', 255, 20, 21],
  ['o', 270.4, 21, 21], ['x', 285.6, 5, 21], ['o', 301, 6, 12], ['x', 316.3, 8, 11],
  ['o', 332, 9, 11], ['x', 347, 2, 10], ['o', 362.3, 3, 11], ['x', 378, 5, 10],
  ['o', 393.3, 6, 10], ['x', 408.7, 1, 9], ['o', 424, 2, 7], ['x', 439.3, -1, 6],
  ['o', 455, 0, 8], ['x', 470, 0, 7], ['o', 485.7, 1, 11], ['x', 501, 3, 10],
  ['o', 516.3, 4, 8], ['x', 531.7, 4, 7], ['o', 547, 5, 7], ['x', 562.3, 2, 6]
];
const mainGroup = document.getElementById('marks-main');
mainColumns.forEach(([t, x, a, b]) => drawColumn(mainGroup, t, x, a, b, 380.7, 15.35));

const smallColumns = [
  ['x', 436.5, 0, 0], ['x', 446, -1, 0], ['o', 450.5, 0, 0],
  ['x', 481.7, -1, 0], ['o', 486.3, 0, 0], ['x', 491, -5, 0], ['o', 495.6, -3, 0],
  ['x', 500.2, -1, 0], ['o', 504.8, 0, 0],
  ['x', 536.7, -3, 0], ['o', 541.3, -2, 0], ['x', 545.9, -2, 0], ['o', 550.5, -2, 0]
];
const smallGroup = document.getElementById('marks-a');
smallColumns.forEach(([t, x, a, b]) => drawColumn(smallGroup, t, x, a, b, 163.4, 4.6));
```
